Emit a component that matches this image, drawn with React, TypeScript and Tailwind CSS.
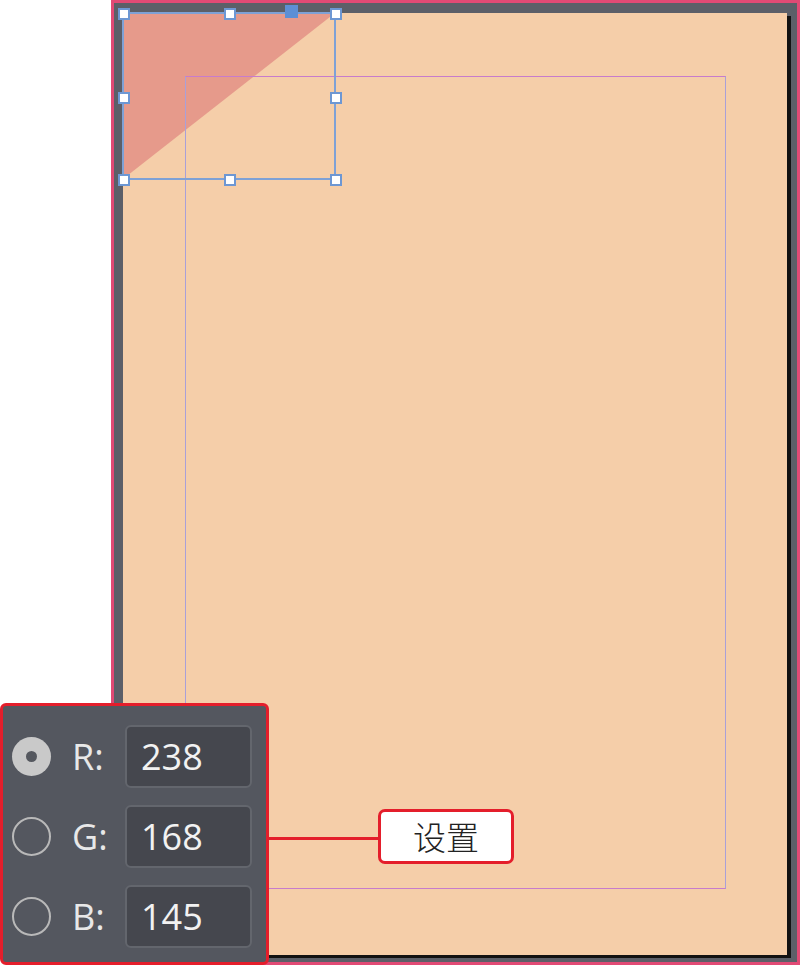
const handles = [
  'left-[-6px] top-[-6px]',
  'left-[100px] top-[-6px]',
  'left-[206px] top-[-6px]',
  'left-[-6px] top-[78px]',
  'left-[206px] top-[78px]',
  'left-[-6px] top-[160px]',
  'left-[100px] top-[160px]',
  'left-[206px] top-[160px]',
];

const rows = [
  { label: 'R:', value: '238', checked: true },
  { label: 'G:', value: '168', checked: false },
  { label: 'B:', value: '145', checked: false },
];

const Radio = ({ checked }: { checked: boolean }) =>
  checked ? (
    <div className="w-[39px] h-[39px] rounded-full bg-[#c9c9c9] flex items-center justify-center">
      <div className="w-[11px] h-[11px] rounded-full bg-[#55585f]" />
    </div>
  ) : (
    <div className="w-[39px] h-[39px] rounded-full border-2 border-[#b9b9b9]" />
  );

export default function App() {
  return (
    <div className="relative w-[800px] h-[965px] bg-white overflow-hidden font-['Open_Sans',sans-serif]">
      {/* document frame */}
      <div className="ml-[111px] h-[965px] border-[3px] border-[#e14a75] bg-[#5c5f68] pl-[9px] pt-[10px]">
        <div className="relative w-[664px] h-[942px] bg-[#f5cea9] shadow-[4px_3px_0_#121212]">
          <svg className="absolute left-0 top-0" width="213" height="167">
            <polygon points="0,0 212,0 0,166" fill="#e69a8b" />
          </svg>
          {/* margin guides */}
          <div className="absolute left-[62px] top-[63px] w-[541px] h-[813px] border-y border-y-[#c77ccc] border-x border-x-[#a9a0d8]" />
          {/* selection */}
          <div className="absolute left-[-1px] top-[-1px] w-[214px] h-[168px] border-2 border-solid border-[color:#7ea1d6]">
            {handles.map((h) => (
              <div
                key={h}
                className={`absolute ${h} w-[12px] h-[12px] bg-white border-2 border-solid border-[color:#6d97d3]`}
              />
            ))}
            <div className="absolute left-[161px] top-[-9px] w-[13px] h-[13px] bg-[#5d8fd5]" />
          </div>
        </div>
      </div>

      {/* color panel */}
      <div className="absolute left-0 top-[703px] w-[269px] h-[262px] border-[3px] border-[#e41e2b] rounded-[6px] bg-[#54575f] pt-[19px] flex flex-col gap-[17px]">
        {rows.map((r) => (
          <div key={r.label} className="flex items-center h-[63px]">
            <div className="ml-[9px] w-[39px]">
              <Radio checked={r.checked} />
            </div>
            <div className="ml-[21px] w-[53px] text-[36px] leading-none font-medium text-[#e8e8e8]">{r.label}</div>
            <div className="w-[127px] h-[63px] rounded-[6px] bg-[#45474e] border-2 border-[#63666d] flex items-center pl-[14px] text-[36px] leading-none font-medium text-[#f2f2f2]">
              {r.value}
            </div>
          </div>
        ))}
      </div>

      {/* callout */}
      <div className="absolute left-[269px] top-[837px] w-[110px] h-[3px] bg-[#e41e2b]" />
      <div className="absolute left-[378px] top-[809px] w-[136px] h-[55px] bg-white border-[3px] border-[#e41e2b] rounded-[7px] flex items-center justify-center text-[33px] leading-none font-light text-[#222] font-['Noto_Sans_CJK_SC',sans-serif]">
        设置
      </div>
    </div>
  );
}
